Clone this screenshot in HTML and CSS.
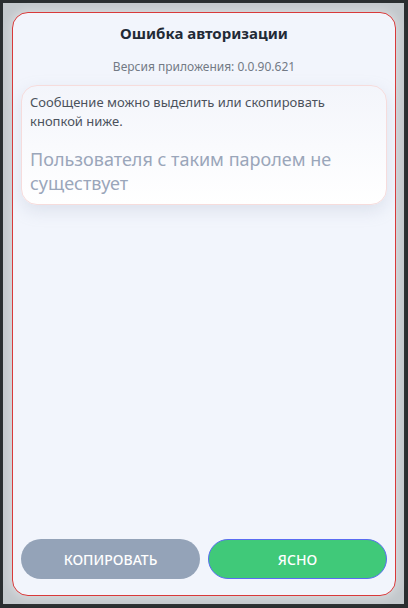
FILE: index.html
```html
<!DOCTYPE html>
<html lang="ru">
<head>
<meta charset="utf-8">
<link rel="stylesheet" href="styles.css">
</head>
<body>
<div class="frame">
  <div class="dialog">
    <h1 class="title">Ошибка авторизации</h1>
    <div class="version">Версия приложения: 0.0.90.621</div>
    <div class="card">
      <p class="hint">Сообщение можно выделить или скопировать кнопкой ниже.</p>
      <p class="error">Пользователя с таким паролем не существует</p>
    </div>
    <div class="spacer"></div>
    <div class="actions">
      <button class="btn btn-copy">КОПИРОВАТЬ</button>
      <button class="btn btn-ok">ЯСНО</button>
    </div>
  </div>
</div>
</body>
</html>
```
FILE: styles.css
```css
html, body {
  margin: 0;
  padding: 0;
  width: 408px;
  height: 608px;
  background: #2a2e30;
  font-family: "Noto Sans", "Open Sans", sans-serif;
}
.frame {
  box-sizing: border-box;
  margin: 3px 4px 4px 3px;
  height: 601px;
  background: #c3c8cc;
  padding: 9px 8px 8px 9px;
  display: flex;
}
.dialog {
  flex: 1;
  box-sizing: border-box;
  background: #f2f5fc;
  border: 1px solid #d93a3a;
  border-radius: 16px;
  box-shadow: 0 0 8px 2px rgba(255,255,255,0.35);
  display: flex;
  flex-direction: column;
  padding: 0 8px 16px 8px;
}
.title {
  margin: 10px 0 0;
  text-align: center;
  font-size: 15px;
  font-weight: 700;
  color: #222a36;
  line-height: 20px;
}
.version {
  margin-top: 16px;
  text-align: center;
  font-size: 12px;
  color: #737a85;
  line-height: 16px;
}
.card {
  margin-top: 10px;
  background: linear-gradient(180deg, #f3f5fb 0%, #ffffff 100%);
  border: 1px solid #f6dcdc;
  border-radius: 16px;
  box-shadow: 0 6px 16px rgba(160,170,195,0.25);
  padding: 7px 8px 9px 8px;
}
.hint {
  margin: 0;
  font-size: 13px;
  line-height: 19px;
  color: #4b525c;
}
.error {
  margin: 16px 0 0;
  font-size: 18px;
  line-height: 24px;
  color: #9aa6ba;
}
.spacer { flex: 1; }
.actions {
  display: flex;
  gap: 8px;
}
.btn {
  flex: 1;
  height: 40px;
  border-radius: 20px;
  border: 1px solid transparent;
  font-family: "Noto Sans", "Open Sans", sans-serif;
  font-size: 14px;
  font-weight: 500;
  color: #ffffff;
  cursor: pointer;
}
.btn-copy {
  background: #94a3b8;
}
.btn-ok {
  background: #40c979;
  border-color: #5a6cf2;
}
```
